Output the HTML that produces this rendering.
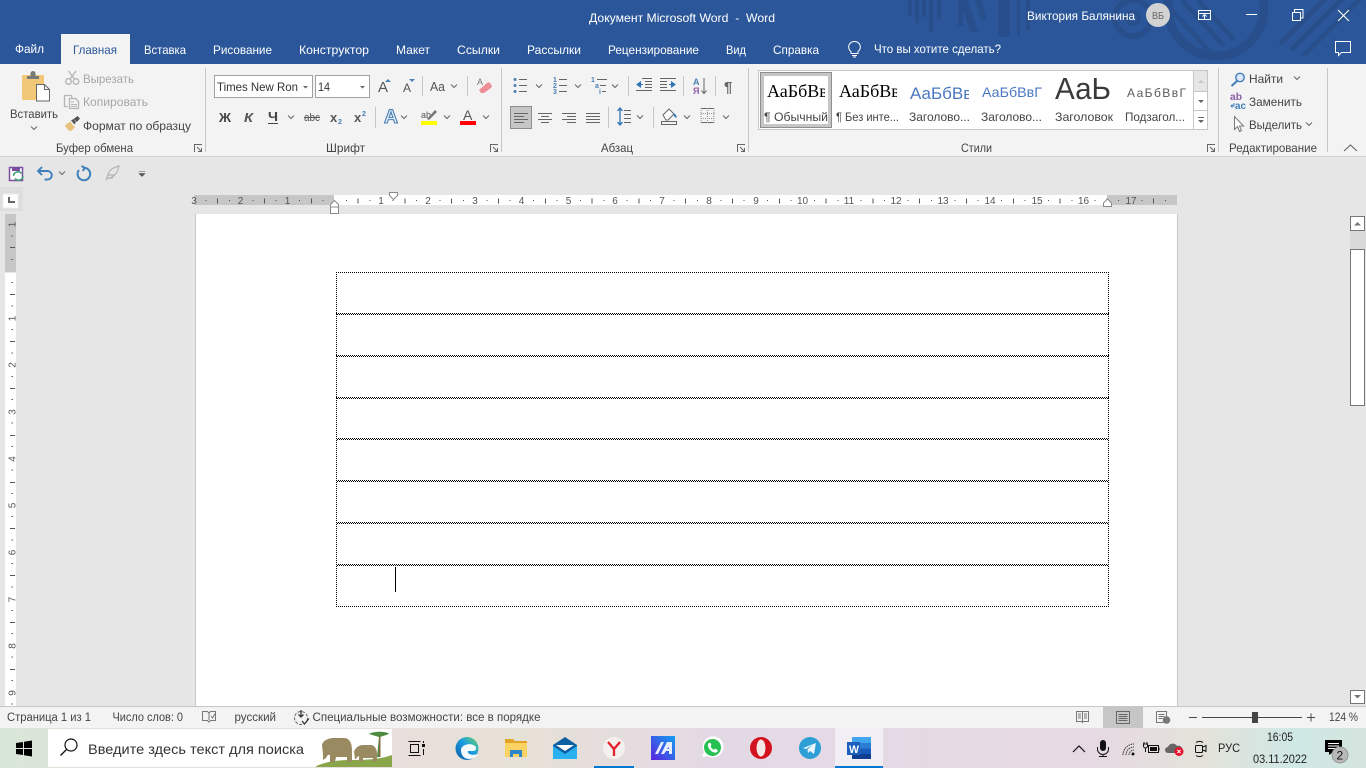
<!DOCTYPE html>
<html lang="ru"><head><meta charset="utf-8"><title>Документ Microsoft Word - Word</title>
<style>
html,body{margin:0;padding:0;width:1366px;height:768px;overflow:hidden;background:#e6e6e6}
svg{display:block;position:absolute;left:0;top:0}
text{font-family:"Liberation Sans",sans-serif;font-size:12px;fill:#444;white-space:pre}
.tab{fill:#fff;font-size:12px}
.w{fill:#fff}
.g{fill:#444;font-size:12px}
.dis{fill:#a6a6a6;font-size:12px}
.st{fill:#444;font-size:11.5px}
.r{font-size:10px;fill:#555}
.tb{fill:#222}
</style></head><body>
<svg width="1366" height="768" viewBox="0 0 1366 768" xmlns="http://www.w3.org/2000/svg">
<defs>
<linearGradient id="tbg" x1="0" x2="1" y1="0" y2="0">
<stop offset="0" stop-color="#d8e6d8"/><stop offset=".29" stop-color="#e8dedb"/><stop offset=".38" stop-color="#e6e1d6"/><stop offset=".52" stop-color="#e3d9e4"/><stop offset=".8" stop-color="#e6d9e3"/><stop offset=".88" stop-color="#e3e2d9"/><stop offset=".95" stop-color="#cfe8e5"/><stop offset="1" stop-color="#d4e4dd"/>
</linearGradient>
<linearGradient id="ma" x1="0" x2="1" y1="1" y2="0"><stop offset="0" stop-color="#5a22e0"/><stop offset="1" stop-color="#12a0f0"/></linearGradient>
<linearGradient id="edge" x1="0" x2="1" y1="1" y2="0"><stop offset="0" stop-color="#0c59a4"/><stop offset=".55" stop-color="#1b9de2"/><stop offset="1" stop-color="#6dd35f"/></linearGradient>
<g id="c"><path d="M-3-1.500 0 1.500 3-1.500" fill="none" stroke="#666" stroke-width="1"/></g>
<g id="l"><path d="M.5 8V.5H8M3 3l4.500 4.500M7.500 4v3.500H4" fill="none" stroke="#666" stroke-width="1"/></g>
<clipPath id="c1"><rect x="764" y="76" width="61" height="30"/></clipPath>
<clipPath id="c2"><rect x="838" y="76" width="59" height="30"/></clipPath>
<clipPath id="c3"><rect x="908" y="76" width="61" height="30"/></clipPath>
<clipPath id="ct"><rect x="900" y="0" width="466" height="64"/></clipPath>
</defs>

<!-- title bar -->
<rect width="1366" height="64" fill="#2b579a"/>
<g clip-path="url(#ct)" fill="#284f8b">
<rect x="908" width="4" height="16"/><rect x="915" width="4" height="23"/><rect x="922" width="4" height="17"/><rect x="929" width="4" height="32"/><rect x="937" width="4" height="20"/>
<rect x="958" width="5" height="26"/><path d="M960 0h8l10 32h-8zM975 0h6l6 20h-6z"/>
<rect x="998" width="12" height="37"/><rect x="1017" width="3" height="36"/><rect x="1026" width="4" height="30"/>
<circle cx="1133" cy="18" r="18" fill="none" stroke="#284f8b" stroke-width="6"/><circle cx="1133" cy="18" r="6" fill="none" stroke="#284f8b" stroke-width="4"/>
<circle cx="1216" cy="8" r="48" fill="none" stroke="#284f8b" stroke-width="9"/>
<path d="M1170 8l40 44M1182 0l42 46M1198 0l36 40" stroke="#284f8b" stroke-width="5" fill="none"/>
<path d="M1280 44l46-46M1291 50l54-54M1303 56l62-62" stroke="#284f8b" stroke-width="5" fill="none"/>
</g>
<text class="w" x="589" y="22" textLength="186" lengthAdjust="spacingAndGlyphs">Документ Microsoft Word  -  Word</text>
<text class="w" x="1027" y="20" textLength="108" lengthAdjust="spacingAndGlyphs">Виктория Балянина</text>
<circle cx="1158" cy="15" r="12" fill="#d2d2d2"/>
<text x="1152" y="19" style="font-size:10px;fill:#666" textLength="12" lengthAdjust="spacingAndGlyphs">ВБ</text>
<g fill="none" stroke="#fff" stroke-width="1">
<path d="M1198.500 10.500h12v9h-12zM1198.500 13.500h12M1204.500 19v-4M1202.500 16.500l2-2 2 2"/>
<path d="M1246 14.500h11"/>
<path d="M1292.500 12.500h8v8h-8zM1294.500 12v-2.500h8.500v8.500h-2.500"/>
<path d="M1338 10l11 11M1349 10l-11 11" stroke-width="1.100"/>
<path d="M1335.500 41.500h15v11h-9l-3 3v-3h-3z"/>
<path d="M854.500 41.500a5.500 5.500 0 0 1 3.500 10v2h-7v-2a5.500 5.500 0 0 1 3.500-10zM852 55.500h5M853 57h3" stroke="#fff"/>
</g>

<!-- tabs -->
<rect x="61" y="34" width="69" height="30" fill="#f3f3f3"/>
<text class="tab" x="15" y="53" textLength="29" lengthAdjust="spacingAndGlyphs">Файл</text>
<text x="73" y="54" style="fill:#2b579a" textLength="44" lengthAdjust="spacingAndGlyphs">Главная</text>
<text class="tab" x="144" y="54" textLength="42" lengthAdjust="spacingAndGlyphs">Вставка</text>
<text class="tab" x="213" y="54" textLength="59" lengthAdjust="spacingAndGlyphs">Рисование</text>
<text class="tab" x="299" y="54" textLength="70" lengthAdjust="spacingAndGlyphs">Конструктор</text>
<text class="tab" x="396" y="54" textLength="34" lengthAdjust="spacingAndGlyphs">Макет</text>
<text class="tab" x="457" y="54" textLength="43" lengthAdjust="spacingAndGlyphs">Ссылки</text>
<text class="tab" x="527" y="54" textLength="54" lengthAdjust="spacingAndGlyphs">Рассылки</text>
<text class="tab" x="608" y="54" textLength="91" lengthAdjust="spacingAndGlyphs">Рецензирование</text>
<text class="tab" x="726" y="54" textLength="20" lengthAdjust="spacingAndGlyphs">Вид</text>
<text class="tab" x="773" y="54" textLength="46" lengthAdjust="spacingAndGlyphs">Справка</text>
<text class="tab" x="874" y="53" textLength="127" lengthAdjust="spacingAndGlyphs">Что вы хотите сделать?</text>

<!-- ribbon -->
<rect y="64" width="1366" height="92" fill="#f3f3f3"/>
<rect y="156" width="1366" height="1" fill="#d2d2d2"/>
<g fill="#c6c6c6">
<rect x="205" y="68" width="1" height="84"/><rect x="501" y="68" width="1" height="84"/><rect x="748" y="68" width="1" height="84"/><rect x="1218" y="68" width="1" height="84"/><rect x="1327" y="68" width="1" height="84"/>
<rect x="422" y="76" width="1" height="20"/><rect x="467" y="76" width="1" height="20"/><rect x="375" y="107" width="1" height="21"/>
<rect x="628" y="76" width="1" height="20"/><rect x="683" y="76" width="1" height="20"/><rect x="715" y="76" width="1" height="20"/><rect x="608" y="107" width="1" height="21"/><rect x="653" y="107" width="1" height="21"/>
</g>

<!-- clipboard -->
<rect x="22" y="75" width="22" height="25" rx="1" fill="#f0c877"/>
<path d="M27 79v-3h3.500v-2.500a2 2 0 0 1 5 0V76H39v3z" fill="#7a7a7a"/>
<path d="M36.500 84.500h8l5 5v11.500h-13z" fill="#fff" stroke="#666"/><path d="M44.500 84.500v5h5" fill="none" stroke="#666"/>
<text x="10" y="118" class="g" textLength="48" lengthAdjust="spacingAndGlyphs">Вставить</text>
<use href="#c" x="34" y="128"/>
<g fill="none" stroke="#b5b5b5" stroke-width="1.300">
<circle cx="68.500" cy="81.500" r="2.800"/><circle cx="76" cy="81.500" r="2.800"/><path d="M70 79l6-8M74.500 79l-6-8"/>
<path d="M64.500 95.500h7l.5 3M64.500 95.500v11h3M69.500 98.500h6l3 3v7h-9z"/><path d="M71 102h3M71 104.500h6M71 106.500h6" stroke-width="1"/>
</g>
<text class="dis" x="83" y="83" textLength="51" lengthAdjust="spacingAndGlyphs">Вырезать</text>
<text class="dis" x="83" y="106" textLength="65" lengthAdjust="spacingAndGlyphs">Копировать</text>
<path d="M65 125.500l5-4 5 6-4 3.500c-2 .2-5-3-6-5.500z" fill="#e8c17a"/><path d="M71 120.500l2.500-1.500 2.500 3-1.500 2.500zM73.500 119l4-3 2.500 2.500-3 3.500z" fill="#555"/>
<text class="g" x="83" y="130" textLength="108" lengthAdjust="spacingAndGlyphs">Формат по образцу</text>
<text class="g" x="56" y="152" textLength="77" lengthAdjust="spacingAndGlyphs">Буфер обмена</text>
<use href="#l" x="194" y="144"/>

<!-- font -->
<rect x="214.500" y="75.500" width="98" height="22" fill="#fff" stroke="#a0a0a0"/>
<rect x="315.500" y="75.500" width="54" height="22" fill="#fff" stroke="#a0a0a0"/>
<text x="217" y="91" style="fill:#333" textLength="81" lengthAdjust="spacingAndGlyphs">Times New Ron</text>
<text x="318" y="91" style="fill:#333" textLength="12" lengthAdjust="spacingAndGlyphs">14</text>
<path d="M303 86h5l-2.500 2.500zM360 86h5l-2.500 2.500z" fill="#666"/>
<text x="378" y="92" style="font-size:15px;fill:#555">A</text><path d="M385 82l3-3 3 3z" fill="#4a7fb5"/>
<text x="403" y="92" style="font-size:12px;fill:#555">A</text><path d="M409 79h6l-3 3z" fill="#4a7fb5"/>
<text x="430" y="91" style="font-size:13px;fill:#555" textLength="15" lengthAdjust="spacingAndGlyphs">Aa</text>
<use href="#c" x="454" y="86"/>
<text x="477" y="85" style="font-size:9px;fill:#777">A</text>
<path d="M479 90l8-7c1-1 2-1 3 0l1.500 2c.5 1 .5 2-.5 3l-7 5h-3z" fill="#ee8f95"/>

<text x="219" y="122" style="font-size:13px;font-weight:bold;fill:#444" textLength="12" lengthAdjust="spacingAndGlyphs">Ж</text>
<text x="244" y="122" style="font-size:13px;font-weight:bold;font-style:italic;fill:#555" textLength="9" lengthAdjust="spacingAndGlyphs">К</text>
<text x="268" y="121" style="font-size:13px;font-weight:bold;fill:#444" textLength="10" lengthAdjust="spacingAndGlyphs">Ч</text><rect x="268" y="123" width="10" height="1" fill="#444"/>
<use href="#c" x="291" y="117"/>
<text x="304" y="121" style="font-size:11px;fill:#555" textLength="16" lengthAdjust="spacingAndGlyphs">abc</text><rect x="304" y="117" width="16" height="1" fill="#555"/>
<text x="330" y="122" style="font-size:13px;font-weight:bold;fill:#555">x</text><text x="338" y="124" style="font-size:7px;font-weight:bold;fill:#4a7fb5">2</text>
<text x="354" y="122" style="font-size:13px;font-weight:bold;fill:#555">x</text><text x="362" y="116" style="font-size:7px;font-weight:bold;fill:#4a7fb5">2</text>
<text x="384" y="123" style="font-size:19px;font-weight:bold;fill:#e4eef8;stroke:#4a7fb5;stroke-width:1.100" textLength="14" lengthAdjust="spacingAndGlyphs">A</text>
<use href="#c" x="404" y="117"/>
<text x="421" y="118" style="font-size:9px;fill:#555" textLength="10" lengthAdjust="spacingAndGlyphs">ab</text>
<path d="M427 119l8-9 2 2-8 8z" fill="#777"/>
<rect x="421" y="121" width="16" height="4" fill="#ff0"/>
<use href="#c" x="447" y="117"/>
<text x="463" y="120" style="font-size:14px;fill:#555">A</text><rect x="460" y="121" width="16" height="4" fill="#f00"/>
<use href="#c" x="486" y="117"/>
<text class="g" x="326" y="152" textLength="39" lengthAdjust="spacingAndGlyphs">Шрифт</text>
<use href="#l" x="490" y="144"/>

<!-- paragraph -->
<g fill="#4a7fb5">
<circle cx="515" cy="79.500" r="1.500"/><circle cx="515" cy="85.500" r="1.500"/><circle cx="515" cy="91.500" r="1.500"/>
</g>
<g stroke="#666" stroke-width="1" fill="none">
<path d="M519 79.500h8M519 85.500h8M519 91.500h8M559 79.500h8M559 85.500h8M559 91.500h8M597 79.500h10M600 85.500h6M602 91.500h4"/>
<path d="M642 78.500h10M645 81.500h7M645 84.500h7M645 87.500h7M636 90.500h16M660 78.500h16M660 81.500h7M660 84.500h7M660 87.500h7M660 90.500h16"/>
</g>
<text x="553" y="82" style="font-size:7px;font-weight:bold;fill:#4a7fb5">1</text><text x="553" y="88" style="font-size:7px;font-weight:bold;fill:#4a7fb5">2</text><text x="553" y="94" style="font-size:7px;font-weight:bold;fill:#4a7fb5">3</text>
<text x="591" y="82" style="font-size:7px;font-weight:bold;fill:#4a7fb5">1</text><text x="595" y="88" style="font-size:7px;font-weight:bold;fill:#4a7fb5">a</text><text x="599" y="94" style="font-size:7px;font-weight:bold;fill:#4a7fb5">i</text>
<use href="#c" x="539" y="86"/><use href="#c" x="578" y="86"/><use href="#c" x="615" y="86"/>
<path d="M636 84.500l5-3.500v7zM676 84.500l-5-3.500v7z" fill="#2f74b5"/><path d="M640 84.500h3M669 84.500h3" stroke="#2f74b5"/>
<text x="693" y="85" style="font-size:9px;font-weight:bold;fill:#4a7fb5">A</text><text x="693" y="94" style="font-size:9px;font-weight:bold;fill:#8b5fa8">Я</text>
<path d="M704 78v15M701.500 90.500l2.500 3 2.500-3" fill="none" stroke="#666"/>
<text x="724" y="92" style="font-size:15px;font-weight:bold;fill:#666">¶</text>
<rect x="510.500" y="106.500" width="21" height="22" fill="#c6c6c6" stroke="#8e8e8e"/>
<g stroke="#666" stroke-width="1" fill="none">
<path d="M514 113.500h14M514 116.500h10M514 119.500h14M514 122.500h10"/>
<path d="M538 113.500h14M541 116.500h8M538 119.500h14M541 122.500h8"/>
<path d="M562 113.500h14M567 116.500h9M562 119.500h14M567 122.500h9"/>
<path d="M586 113.500h14M586 116.500h14M586 119.500h14M586 122.500h14"/>
<path d="M624 110.500h7M624 114.500h7M624 118.500h7M624 122.500h7"/>
<path d="M661.500 121.500h15v3h-15z"/>
<path d="M701 108.500h13M701 122.500h13" />
<path d="M701 113.500h13M701 118.500h13M701 108v15M707.500 108v15M714 108v15" stroke="#999" stroke-dasharray="1 1"/>
</g>
<path d="M620 108.500v16M617.500 111l2.500-3 2.500 3M617.500 122l2.500 3 2.500-3" stroke="#2f74b5" fill="none" stroke-width="1.300"/>
<path d="M663 115l6-6 5 5-6 6h-2z" fill="#fff" stroke="#666"/><path d="M673 113c2 1 4 2 3.500 5-1.500-.5-3-2-3.500-5z" fill="#2f74b5"/>
<use href="#c" x="640" y="117"/><use href="#c" x="687" y="117"/><use href="#c" x="726" y="117"/>
<text class="g" x="601" y="152" textLength="32" lengthAdjust="spacingAndGlyphs">Абзац</text>
<use href="#l" x="737" y="144"/>

<!-- styles -->
<rect x="758.500" y="70.500" width="449" height="59" fill="#fff" stroke="#c6c6c6"/>
<rect x="760.500" y="72.500" width="71" height="55" fill="#fff" stroke="#8e8e8e"/>
<rect x="762.500" y="74.500" width="67" height="51" fill="none" stroke="#c6c6c6" stroke-width="3"/>
<g clip-path="url(#c1)"><text x="767" y="97" style="font-family:'Liberation Serif',serif;font-size:18px;fill:#000">АаБбВвГ</text></g>
<g clip-path="url(#c2)"><text x="839" y="97" style="font-family:'Liberation Serif',serif;font-size:18px;fill:#000">АаБбВвГ</text></g>
<g clip-path="url(#c3)"><text x="910" y="99" style="font-size:17px;fill:#4a78c0">АаБбВвГ</text></g>
<text x="982" y="97" style="font-size:14px;fill:#4a78c0" textLength="60" lengthAdjust="spacingAndGlyphs">АаБбВвГ</text>
<text x="1055" y="99" style="font-size:31px;fill:#3a3a3a" textLength="56" lengthAdjust="spacingAndGlyphs">АаЬ</text>
<text x="1127" y="97" style="font-size:12px;fill:#5a5a5a" textLength="59">АаБбВвГ</text>
<text x="764" y="121" class="g" textLength="64" lengthAdjust="spacingAndGlyphs">¶ Обычный</text>
<text x="836" y="121" class="g" textLength="63" lengthAdjust="spacingAndGlyphs">¶ Без инте...</text>
<text x="909" y="121" class="g" textLength="61" lengthAdjust="spacingAndGlyphs">Заголово...</text>
<text x="981" y="121" class="g" textLength="61" lengthAdjust="spacingAndGlyphs">Заголово...</text>
<text x="1055" y="121" class="g" textLength="58" lengthAdjust="spacingAndGlyphs">Заголовок</text>
<text x="1125" y="121" class="g" textLength="60" lengthAdjust="spacingAndGlyphs">Подзагол...</text>
<rect x="1194" y="71" width="13" height="20" fill="#e6e6e6"/>
<path d="M1193.500 71v58M1194 91.500h14M1194 110.500h14" stroke="#c6c6c6" fill="none"/>
<path d="M1198 83h6l-3-3z" fill="#c6c6c6"/><path d="M1198 100h6l-3 3z" fill="#666"/><path d="M1198 117.500h6" stroke="#666"/><path d="M1198 120h6l-3 3z" fill="#666"/>
<text class="g" x="961" y="152" textLength="31" lengthAdjust="spacingAndGlyphs">Стили</text>
<use href="#l" x="1207" y="144"/>

<!-- editing -->
<circle cx="1240" cy="77.500" r="4.200" fill="#dce9f5" stroke="#3f7fbb" stroke-width="1.400"/><path d="M1237 81l-5.500 5" stroke="#3f7fbb" stroke-width="2"/>
<text class="g" x="1249" y="83" textLength="34" lengthAdjust="spacingAndGlyphs">Найти</text><use href="#c" x="1297" y="78"/>
<text x="1230" y="100" style="font-size:10px;font-weight:bold;fill:#8b5fa8" textLength="12" lengthAdjust="spacingAndGlyphs">ab</text>
<text x="1235" y="109" style="font-size:10px;font-weight:bold;fill:#3f7fbb" textLength="11" lengthAdjust="spacingAndGlyphs">ac</text>
<path d="M1234 103v3h-3M1232.500 104.500l-1.500 1.500 1.500 1.500" fill="none" stroke="#3f7fbb"/>
<text class="g" x="1249" y="106" textLength="53" lengthAdjust="spacingAndGlyphs">Заменить</text>
<path d="M1234.500 116.500v13l3-3 2 5 2-1-2-4.500h4z" fill="#fff" stroke="#777"/>
<text class="g" x="1249" y="129" textLength="53" lengthAdjust="spacingAndGlyphs">Выделить</text><use href="#c" x="1309" y="124"/>
<text class="g" x="1229" y="152" textLength="88" lengthAdjust="spacingAndGlyphs">Редактирование</text>
<path d="M1344 151l6.500-6 6.500 6" fill="none" stroke="#666" stroke-width="1.100"/>

<!-- QAT -->
<rect x="9.500" y="167.500" width="13" height="13" fill="#fff" stroke="#7b4fa0" stroke-width="1.500"/>
<rect x="12" y="167" width="8" height="4" fill="#7b4fa0"/>
<path d="M13.500 176a4.500 4.500 0 0 1 8-2.500M23 176a4.500 4.500 0 0 1-8 2.500" fill="none" stroke="#3f9e78" stroke-width="1.500"/>
<path d="M38.500 171h9a4.300 4.300 0 0 1 0 8.600h-3M42 167l-4 4 4 4" fill="none" stroke="#3f7fbb" stroke-width="1.900"/>
<use href="#c" x="62" y="173"/>
<path d="M79 170a6.300 6.300 0 1 0 5.500-2.300M81.500 166l3.200 1.800-1.800 3.200" fill="none" stroke="#3f7fbb" stroke-width="2"/>
<path d="M106 180l3-8c2-3 6-5 10-6-1 5-3 9-7 11l-5 2M108 175h7M108 178h5" fill="none" stroke="#b5b5b5" stroke-width="1.200"/>
<path d="M139 171.500h6M139 173.500h6l-3 3z" fill="#555" stroke="#555" stroke-width=".6"/>

<!-- ruler corner -->
<rect x="0" y="187" width="23" height="24" fill="#dedede"/>
<rect x="3" y="194" width="15" height="14" fill="#fff" stroke="#eee"/>
<path d="M8 197v6h7v-2h-5v-4z" fill="#666"/>

<!-- h ruler -->
<rect x="194" y="195" width="140" height="10" fill="#c6c6c6"/>
<rect x="334" y="195" width="773" height="10" fill="#fff"/>
<rect x="1107" y="195" width="70" height="10" fill="#c6c6c6"/>
<path d="M205.500 200.500H1177" stroke="#555" stroke-width="1" stroke-dasharray="1 22.400" fill="none" shape-rendering="crispEdges"/>
<path d="M217.200 201H1177" stroke="#555" stroke-width="5" stroke-dasharray="1 45.800" fill="none" shape-rendering="crispEdges"/>
<text class="r" x="194" y="204" text-anchor="middle">3</text><text class="r" x="240.500" y="204" text-anchor="middle">2</text><text class="r" x="287.500" y="204" text-anchor="middle">1</text>
<text class="r" x="381" y="204" text-anchor="middle">1</text><text class="r" x="428" y="204" text-anchor="middle">2</text><text class="r" x="475" y="204" text-anchor="middle">3</text><text class="r" x="521.500" y="204" text-anchor="middle">4</text><text class="r" x="568.500" y="204" text-anchor="middle">5</text><text class="r" x="615" y="204" text-anchor="middle">6</text><text class="r" x="662" y="204" text-anchor="middle">7</text><text class="r" x="709" y="204" text-anchor="middle">8</text><text class="r" x="756" y="204" text-anchor="middle">9</text><text class="r" x="802.500" y="204" text-anchor="middle">10</text><text class="r" x="849" y="204" text-anchor="middle">11</text><text class="r" x="896" y="204" text-anchor="middle">12</text><text class="r" x="943" y="204" text-anchor="middle">13</text><text class="r" x="990" y="204" text-anchor="middle">14</text><text class="r" x="1037" y="204" text-anchor="middle">15</text><text class="r" x="1083.500" y="204" text-anchor="middle">16</text><text class="r" x="1131" y="204" text-anchor="middle">17</text>
<path d="M330.500 213.500v-9l4-4 4 4v9zM330.500 207h8" fill="#fff" stroke="#8a8a8a"/>
<path d="M389.500 192.500h8v3l-4 4-4-4z" fill="#fff" stroke="#8a8a8a"/>
<path d="M1103.500 206.500v-3.500l4-4 4 4v3.500z" fill="#fff" stroke="#8a8a8a"/>

<!-- page -->
<rect x="196" y="214" width="981" height="493" fill="#fff"/>
<rect x="195" y="214" width="1" height="493" fill="#c6c6c6"/>
<rect x="1177" y="214" width="1" height="493" fill="#c6c6c6"/>

<!-- v ruler -->
<rect x="5" y="214" width="11" height="58" fill="#c6c6c6"/>
<rect x="5" y="273" width="11" height="434" fill="#fff"/>
<path d="M12 235.400V707" stroke="#555" stroke-width="1.500" stroke-dasharray="1 22.400" fill="none" shape-rendering="crispEdges"/>
<path d="M10 247.500h5M10 294.500h5M10 341.500h5M10 388.500h5M10 435.500h5M10 482.500h5M10 528.500h5M10 575.500h5M10 622.500h5M10 669.500h5" stroke="#555" fill="none"/>
<text class="r" transform="translate(15.500,224.500) rotate(-90)" text-anchor="middle">1</text>
<text class="r" transform="translate(15.500,318.500) rotate(-90)" text-anchor="middle">1</text>
<text class="r" transform="translate(15.500,365) rotate(-90)" text-anchor="middle">2</text>
<text class="r" transform="translate(15.500,412) rotate(-90)" text-anchor="middle">3</text>
<text class="r" transform="translate(15.500,459) rotate(-90)" text-anchor="middle">4</text>
<text class="r" transform="translate(15.500,505.500) rotate(-90)" text-anchor="middle">5</text>
<text class="r" transform="translate(15.500,552.500) rotate(-90)" text-anchor="middle">6</text>
<text class="r" transform="translate(15.500,599.500) rotate(-90)" text-anchor="middle">7</text>
<text class="r" transform="translate(15.500,646) rotate(-90)" text-anchor="middle">8</text>
<text class="r" transform="translate(15.500,693) rotate(-90)" text-anchor="middle">9</text>

<!-- table -->
<g stroke="#000" stroke-width="1" stroke-dasharray="1 1" fill="none" shape-rendering="crispEdges">
<path d="M336.500 272V607M1108.500 272V607"/>
<path d="M336 272.500H1109M336 606.500H1109"/>
<path d="M336 313.500H1109M337 314.500H1109M336 355.500H1109M337 356.500H1109M336 397.500H1109M337 398.500H1109M336 438.500H1109M337 439.500H1109M336 480.500H1109M337 481.500H1109M336 522.500H1109M337 523.500H1109M336 564.500H1109M337 565.500H1109"/>
</g>
<rect x="395" y="567" width="1" height="25" fill="#000"/>

<!-- scrollbar -->
<rect x="1350" y="231" width="16" height="18" fill="#d9d9d9"/>
<rect x="1350.500" y="216.500" width="14" height="14" fill="#fff" stroke="#777"/>
<path d="M1354 225.500h7l-3.500-3.500z" fill="#777"/>
<rect x="1350.500" y="249.500" width="14" height="156" fill="#fff" stroke="#777"/>
<rect x="1350.500" y="690.500" width="14" height="13" fill="#fff" stroke="#777"/>
<path d="M1354 695h7l-3.500 3.500z" fill="#777"/>

<!-- status bar -->
<rect y="707" width="1366" height="21" fill="#f3f3f3"/>
<rect y="706" width="1366" height="1" fill="#c6c6c6"/>
<text class="st" x="7" y="721" textLength="84" lengthAdjust="spacingAndGlyphs">Страница 1 из 1</text>
<text class="st" x="112.500" y="721" textLength="70.500" lengthAdjust="spacingAndGlyphs">Число слов: 0</text>
<path d="M202.500 711.500h5l1.500 1.500 1.500-1.500h5v9h-5l-1.500 1.500-1.500-1.500h-5zM209 713v7M211 716l1.500 2 3-5" fill="none" stroke="#777"/>
<text class="st" x="234.500" y="721" textLength="41.500" lengthAdjust="spacingAndGlyphs">русский</text>
<circle cx="301" cy="718" r="6.500" fill="none" stroke="#666" stroke-dasharray="3 1.500"/>
<path d="M301 710v7M298.500 714.500l2.500 2.500 2.500-2.500M302 721l2.500 3 4.500-5.500" fill="none" stroke="#333" stroke-width="1.300"/>
<text class="st" x="312.500" y="721" textLength="228" lengthAdjust="spacingAndGlyphs">Специальные возможности: все в порядке</text>
<path d="M1076.500 711.500h5.500l.5 1 .5-1h5.500v10h-5.500l-.5 1-.5-1h-5.500zM1082.500 712v10M1078 714h3M1078 716h3M1078 718h3M1084 714h3M1084 716h3M1084 718h3" fill="none" stroke="#777"/>
<rect x="1103" y="707" width="40" height="21" fill="#c6c6c6"/>
<path d="M1116.500 711.500h13v12h-13zM1118.500 714.500h9M1118.500 716.500h9M1118.500 718.500h9M1118.500 720.500h9" fill="none" stroke="#666"/>
<path d="M1156.500 711.500h10v7M1156.500 711.500v11h7M1158.500 714.500h6M1158.500 716.500h6M1158.500 718.500h4" fill="none" stroke="#777"/><circle cx="1166.500" cy="720" r="3.800" fill="#777"/>
<path d="M1189 717.500h8M1202 717.500h100M1307 717.500h8M1311 713.500v8" stroke="#444" fill="none"/>
<rect x="1252" y="712" width="6" height="11" fill="#444"/>
<text class="st" x="1329" y="721" textLength="29" lengthAdjust="spacingAndGlyphs">124 %</text>

<!-- taskbar -->
<rect y="728" width="1366" height="40" fill="url(#tbg)"/>
<path d="M16 743l7-1v6h-7zM24 741.800l8-1.300v7.500h-8zM16 749h7v6l-7-1zM24 749h8v7.500l-8-1.200z" fill="#000"/>
<rect x="48" y="729" width="344" height="38" fill="#fff"/>
<circle cx="71" cy="745" r="6" fill="none" stroke="#111" stroke-width="1.200"/><path d="M66.500 749.500l-6 6" stroke="#111" stroke-width="1.300"/>
<text x="88" y="754" style="font-size:14px;fill:#333" textLength="216" lengthAdjust="spacingAndGlyphs">Введите здесь текст для поиска</text>
<!-- elephants -->
<path d="M315 767c8-5 22-7 36-7 16 0 30-1 41-5v12z" fill="#8aa64b"/>
<path d="M322 746c0-5 6-8 12-8h10c6 0 8 6 8 12v12h-5v-5h-11l-1 5h-5v-7c-2-1-3 1-4 3l-3 2c0-4 0-9-1-14z" fill="#9a8a62"/>
<path d="M354 752c1-4 5-7 9-7h8c4 0 6 5 6 9v8h-4v-4h-10v4h-4v-6c-2 0-2 3-4 3z" fill="#9a8a62"/>
<path d="M379 737c-3-1-7-2-10-3 4-3 18-3 20 0-3 1-6 2-9 3l-1 20h-2z" fill="#4f8a3e"/><rect x="379" y="737" width="1.500" height="20" fill="#8a6a45"/>

<path d="M408.500 741.500h12M408.500 755.500h12M410.500 744.500h8v8h-8zM423.500 749v6M423.500 741v2" fill="none" stroke="#111"/>
<rect x="422" y="744" width="3" height="3" fill="#111"/>
<!-- edge -->
<circle cx="467" cy="748.500" r="11.500" fill="url(#edge)"/>
<path d="M461 750c0-5 9-8 14-4 2 2 1 5-2 5h-5c-1 3 4 5 10 3-3 5-9 6-13 4-3-2-4-5-4-8z" fill="#fff" opacity=".95"/>
<!-- explorer -->
<path d="M505 739h8l2 2h12v4h-22z" fill="#e3a428"/>
<rect x="505" y="743" width="22" height="14" fill="#fcd262"/>
<path d="M510 750h12v7h-3v-3h-6v3h-3z" fill="#2c86c8"/>
<!-- mail -->
<path d="M553 746h24v13h-24z" fill="#29b0ee"/><path d="M553 746l12 8 12-8v-1l-12-8-12 8z" fill="#0d5fa3"/><path d="M556 745h18l-9 6z" fill="#fff"/>
<!-- yandex -->
<circle cx="614" cy="748" r="11" fill="#f4f0ee"/>
<path d="M608 742l6 7 6-7M614 749v7" fill="none" stroke="#e4202c" stroke-width="2.300"/>
<rect x="594" y="766" width="40" height="2" fill="#0078d4"/>
<!-- MA -->
<rect x="651" y="736" width="24" height="24" fill="url(#ma)"/>
<path d="M655 754l6-12h3l-6 12zM661 754l6-12h5v12h-3v-3h-3l-2 3zM668 748l-1 1h2v-2z" fill="#e8eeff"/>
<!-- whatsapp -->
<path d="M702 757l2-5a10.500 10.500 0 1 1 4 4z" fill="#fff"/>
<circle cx="712.500" cy="747.500" r="8.500" fill="#26c152"/>
<path d="M709 743c-1.500 1-1.500 3 0 5.500 2 3 5 4.500 7 4 1.500-.3 2-2 1.500-2.500l-2.500-1.500-1 1.200c-1.500-.5-3-2-3.500-3.500l1-1-1-2.500z" fill="#fff"/>
<!-- opera -->
<circle cx="761" cy="748" r="11" fill="#d3121f"/><ellipse cx="761" cy="748" rx="4.500" ry="8.500" fill="#f3e7e6"/>
<!-- telegram -->
<circle cx="810" cy="748" r="11" fill="#2e9fd6"/>
<path d="M803 748l13-5-2 11-4-3-2 2-.5-3.500 5-4.500-6.500 4z" fill="#e9f6fc"/>
<!-- word -->
<rect x="835" y="728" width="48" height="40" fill="#f1eef6"/>
<rect x="835" y="766" width="48" height="2" fill="#0078d4"/>
<rect x="852" y="737" width="19" height="6" fill="#41a5ee"/><rect x="852" y="743" width="19" height="5.500" fill="#2b7cd3"/><rect x="852" y="748.500" width="19" height="5.500" fill="#185abd"/><rect x="852" y="754" width="19" height="5" fill="#103f91"/>
<rect x="847" y="742" width="13" height="13" fill="#1b5ebe"/>
<text x="849" y="753" style="font-size:11px;font-weight:bold;fill:#fff" textLength="10" lengthAdjust="spacingAndGlyphs">W</text>

<!-- tray -->
<path d="M1073 752l6-6 6 6" fill="none" stroke="#111" stroke-width="1.200"/>
<rect x="1100" y="740" width="6" height="11" rx="3" fill="#111"/><path d="M1097.500 747v2a5.500 5.500 0 0 0 11 0v-2M1103 755v1.500M1099 756.500h8" fill="none" stroke="#111"/>
<path d="M1123 755a11 11 0 0 1 11-11M1126 755a8 8 0 0 1 8-8M1129 755a5 5 0 0 1 5-5" fill="none" stroke="#333" stroke-dasharray="1.500 .8"/><circle cx="1133" cy="754" r="1.500" fill="#111"/>
<rect x="1148.500" y="745.500" width="10" height="7" fill="none" stroke="#111"/><rect x="1150" y="747" width="7" height="4" fill="#111"/><path d="M1159 747.500v3" stroke="#111"/>
<path d="M1143 744h5M1144 742v2M1147 742v2M1145.500 748v4M1143.500 744v2a2 2 0 0 0 4 0v-2" fill="none" stroke="#111"/>
<path d="M1168 753a3 3 0 0 1 0-6 5 5 0 0 1 9-1 3.500 3.500 0 0 1 3 7z" fill="#666"/>
<circle cx="1179" cy="751.500" r="4.500" fill="#e8112d"/><path d="M1177.300 749.800l3.400 3.400M1180.700 749.800l-3.400 3.400" stroke="#fff"/>
<rect x="1195.500" y="745.500" width="7" height="7" rx="1" fill="none" stroke="#111"/><path d="M1203 747l3-1.500v6l-3-1.500M1196 742.500c2-1.500 5-1.500 7 0M1196 755.500c2 1.500 5 1.500 7 0" fill="none" stroke="#111"/>
<text class="tb" x="1218" y="752" textLength="22" lengthAdjust="spacingAndGlyphs">РУС</text>
<text class="tb" x="1267" y="741" textLength="26" lengthAdjust="spacingAndGlyphs">16:05</text>
<text class="tb" x="1253" y="763" textLength="54" lengthAdjust="spacingAndGlyphs">03.11.2022</text>
<path d="M1325 740h17v12h-9l-4 3v-3h-4z" fill="#000"/><path d="M1328 743.500h11M1328 746h11M1328 748.500h7" stroke="#fff"/>
<circle cx="1340" cy="755" r="8" fill="#b8b8b8" stroke="#999"/>
<text x="1336.500" y="759.500" style="font-size:12px;fill:#111">2</text>
</svg>
</body></html>
